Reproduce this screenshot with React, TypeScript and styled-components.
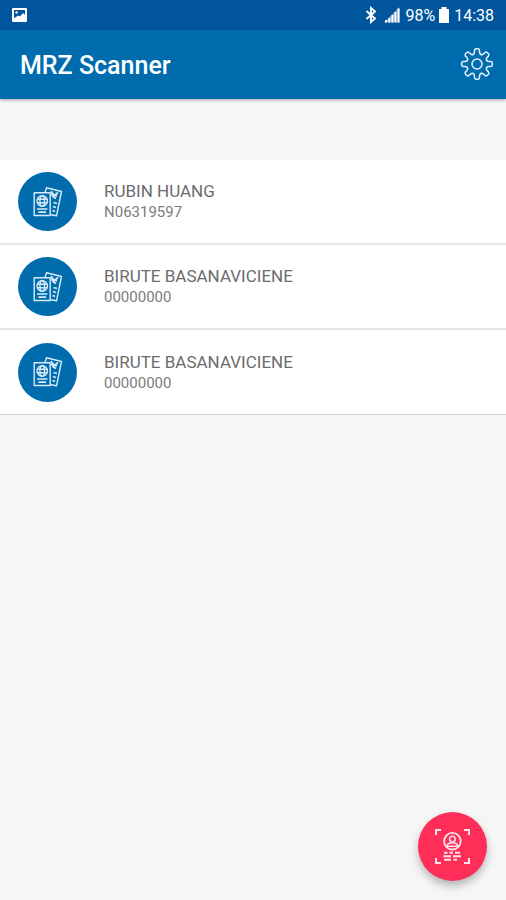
import React from 'react';
import styled, { createGlobalStyle } from 'styled-components';

const GlobalStyle = createGlobalStyle`
  *, *::before, *::after { box-sizing: border-box; }
  body {
    margin: 0;
    background: #f6f6f6;
    font-family: Roboto, "Liberation Sans", sans-serif;
  }
`;

const Screen = styled.div`
  display: flex;
  flex-direction: column;
  min-height: 100vh;
  background: #f6f6f6;
`;

const StatusBar = styled.div`
  display: flex;
  align-items: center;
  justify-content: space-between;
  height: 30px;
  padding: 0 12px 0 11px;
  background: #00559d;
  color: #fff;
`;

const StatusGroup = styled.div`
  display: flex;
  align-items: center;
  font-size: 16px;
  line-height: 30px;
`;

const StatusText = styled.span<{ $gap: number }>`
  margin-left: ${(p) => p.$gap}px;
  padding-top: 1px;
`;

const StatusIcon = styled.svg<{ $gap?: number }>`
  display: block;
  flex: none;
  margin-left: ${(p) => p.$gap ?? 0}px;
`;

const AppBar = styled.header`
  display: flex;
  align-items: center;
  justify-content: space-between;
  height: 69px;
  padding: 0 12px 0 20px;
  background: #006cae;
  color: #fff;
  box-shadow: 0 1px 3px rgba(0, 0, 0, 0.35);
`;

const Title = styled.h1`
  margin: 0;
  padding-top: 2px;
  font-size: 25px;
  line-height: 32px;
  font-weight: 500;
`;

const IconButton = styled.button`
  display: flex;
  padding: 0 0 2px;
  border: 0;
  background: none;
  color: #e3f1fb;
  cursor: pointer;
`;

const List = styled.ul`
  margin: 61px 0 0;
  padding: 0;
  list-style: none;
`;

const Item = styled.li`
  display: flex;
  align-items: center;
  gap: 27px;
  height: 85px;
  padding: 0 18px;
  background: #fff;
  border-bottom: 2px solid #e6e6e6;

  &:last-child {
    border-bottom: 1px solid #d4d4d4;
  }
`;

const Avatar = styled.div`
  display: flex;
  align-items: center;
  justify-content: center;
  flex: none;
  width: 59px;
  height: 59px;
  border-radius: 50%;
  background: #006cae;
`;

const Details = styled.div`
  min-width: 0;
`;

const Name = styled.div`
  font-size: 17px;
  line-height: 22px;
  color: #6c6c6c;
`;

const DocumentNumber = styled.div`
  font-size: 15px;
  line-height: 21px;
  color: #7c7c7c;
`;

const ScanButton = styled.button`
  position: fixed;
  right: 19px;
  bottom: 19px;
  display: flex;
  align-items: center;
  justify-content: center;
  width: 69px;
  height: 69px;
  padding: 0;
  border: 0;
  border-radius: 50%;
  background: #fe2e58;
  box-shadow: 0 5px 8px rgba(0, 0, 0, 0.26);
  cursor: pointer;
`;

const PictureIcon = () => (
  <StatusIcon width="17" height="16" viewBox="0 0 17 16" aria-hidden="true">
    <rect x="1" y="1" width="15" height="14" rx="1" fill="#fff" />
    <path d="M3 3H14V8L12 6L9 9.5L7.5 8.5L3 11Z" fill="#00559d" />
    <circle cx="5.6" cy="5.4" r="1.2" fill="#fff" />
  </StatusIcon>
);

const BluetoothIcon = () => (
  <StatusIcon width="12" height="18" viewBox="0 0 12 18" fill="none" stroke="#fff" strokeWidth="1.9" aria-hidden="true">
    <path d="M1.5 5L10 12.6L6 16V2L10 5.4L1.5 13" />
  </StatusIcon>
);

const SignalIcon = () => (
  <StatusIcon $gap={7} width="16" height="16" viewBox="0 0 16 16" aria-hidden="true">
    <path d="M0 15.5L15.5 0V15.5Z" fill="#6f9fcb" />
    <path d="M1 13H3V15.5H1ZM4.3 11H6.3V15.5H4.3ZM7.4 8H9.4V15.5H7.4ZM10.5 5H12.3V15.5H10.5ZM13.5 1.5H15.5V15.5H13.5Z" fill="#fff" />
  </StatusIcon>
);

const BatteryIcon = () => (
  <StatusIcon $gap={4} width="10" height="16" viewBox="0 0 10 16" aria-hidden="true">
    <path d="M2.5 0H7.5V2H10V16H0V2H2.5Z" fill="#fff" />
  </StatusIcon>
);

const TEETH = [0, 45, 90, 135, 180, 225, 270, 315];

const GearIcon = () => (
  <svg width="34" height="34" viewBox="-17 -17 34 34" fill="none" stroke="currentColor" strokeWidth="1.5" strokeLinecap="round" strokeLinejoin="round" aria-hidden="true">
    {TEETH.map((angle) => (
      <path
        key={angle}
        transform={`rotate(${angle})`}
        d="M-3.9 -9.5C-3.1 -9.9 -2.7 -10.5 -2.6 -11.3L-2.4 -13.8Q-2.2 -15.3 -.9 -15.3H.9Q2.2 -15.3 2.4 -13.8L2.6 -11.3C2.7 -10.5 3.1 -9.9 3.9 -9.5"
      />
    ))}
    <circle r="5" />
  </svg>
);

const PassportIcon = () => (
  <svg width="30" height="32" viewBox="0 0 30 32" fill="none" stroke="#d8eaf8" strokeWidth="1.4" strokeLinejoin="round" aria-hidden="true">
    <path d="M12 6.5L13.5 1.8L28.5 5.5L23.5 29.8L18 28.7" />
    <path d="M18 5.2L20.5 8.5M25 6.5L20 10.8L23 12.5M18 8.5L24 9.8" strokeWidth="1.8" />
    <path d="M20.5 16.5L24 17.5M20 20.5L23 21.5M19.5 24.5L22 25.3" strokeWidth="1.8" />
    <rect x="1.2" y="6.8" width="16" height="22.7" />
    <circle cx="9.2" cy="15" r="5.2" />
    <ellipse cx="9.2" cy="15" rx="2.3" ry="5.2" />
    <path d="M4 13.3H14.4M4 16.7H14.4" />
    <path d="M4 23H14.4M5.5 26.2H13" strokeWidth="1.7" />
  </svg>
);

const ScanIcon = () => (
  <svg width="37" height="37" viewBox="0 0 37 37" fill="none" stroke="#ffe3e9" aria-hidden="true">
    <path d="M2 7V2H7M30 2H35V7M35 30V35H30M7 35H2V30" strokeWidth="2" />
    <circle cx="18.4" cy="13.2" r="8.3" strokeWidth="1.8" />
    <circle cx="18.4" cy="11" r="2.8" strokeWidth="1.4" />
    <path d="M12.9 18.2C13.4 15.6 15.4 14.8 18.4 14.8S23.4 15.6 23.9 18.2Z" strokeWidth="1.4" />
    <path d="M10 24.8H13.5M15.5 24.8H19M21 24.8H26M9.5 28.3H17M19 28.3H27M10 31.8H17M19.5 31.8H23" strokeWidth="2" />
  </svg>
);

const documents = [
  { id: 1, name: 'RUBIN HUANG', number: 'N06319597' },
  { id: 2, name: 'BIRUTE BASANAVICIENE', number: '00000000' },
  { id: 3, name: 'BIRUTE BASANAVICIENE', number: '00000000' },
];

export default function App() {
  return (
    <Screen>
      <GlobalStyle />
      <StatusBar>
        <PictureIcon />
        <StatusGroup>
          <BluetoothIcon />
          <SignalIcon />
          <StatusText $gap={5}>98%</StatusText>
          <BatteryIcon />
          <StatusText $gap={5}>14:38</StatusText>
        </StatusGroup>
      </StatusBar>
      <AppBar>
        <Title>MRZ Scanner</Title>
        <IconButton type="button" aria-label="Settings">
          <GearIcon />
        </IconButton>
      </AppBar>
      <main>
        <List>
          {documents.map((doc) => (
            <Item key={doc.id}>
              <Avatar>
                <PassportIcon />
              </Avatar>
              <Details>
                <Name>{doc.name}</Name>
                <DocumentNumber>{doc.number}</DocumentNumber>
              </Details>
            </Item>
          ))}
        </List>
      </main>
      <ScanButton type="button" aria-label="Scan document">
        <ScanIcon />
      </ScanButton>
    </Screen>
  );
}
